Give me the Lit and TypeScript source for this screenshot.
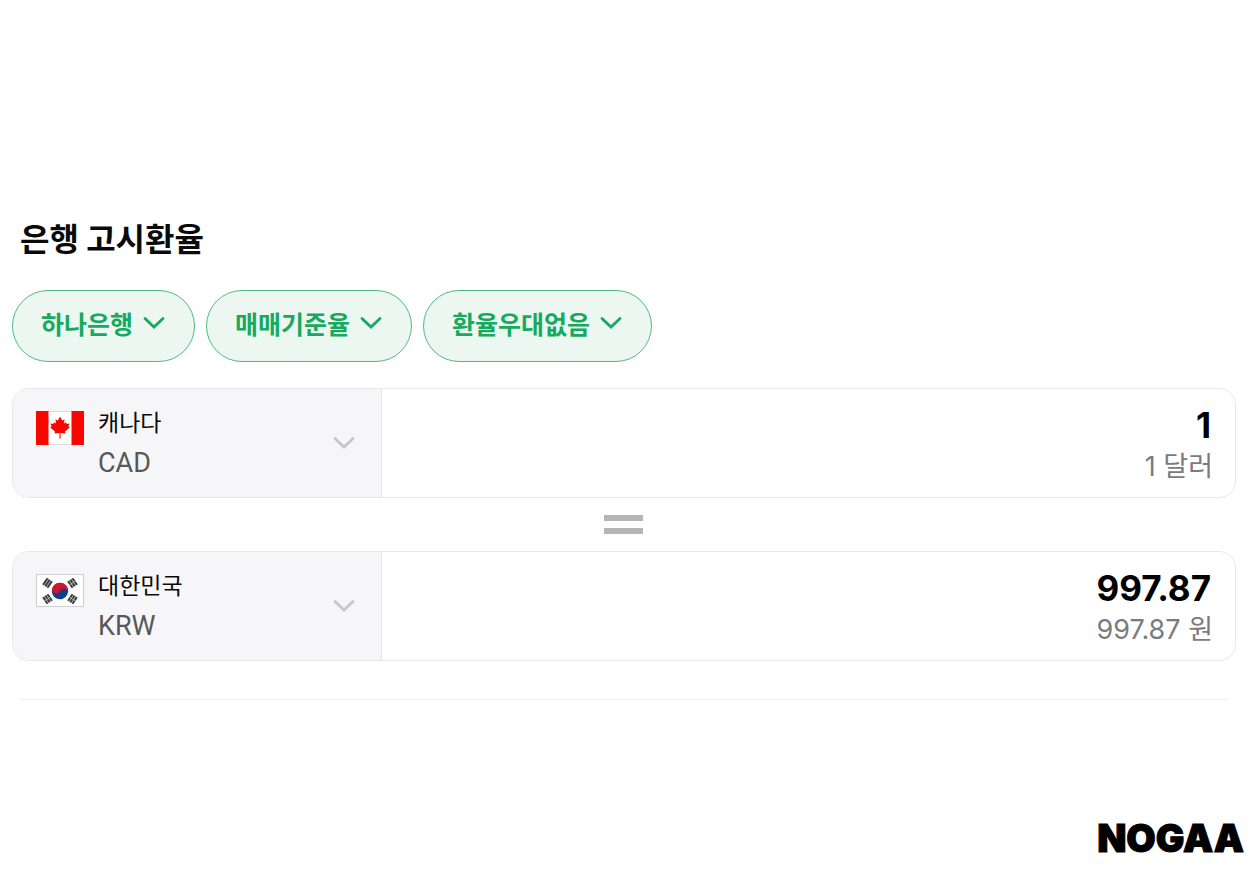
import { LitElement, html, css, svg } from "lit";
import { customElement, property, state } from "lit/decorators.js";

const chevron = html`<svg class="chevron" viewBox="0 0 22 14" width="22" height="14" aria-hidden="true">
  <path d="M2 2.4 L11 11 L20 2.4" fill="none" stroke="currentColor" stroke-width="2.8" stroke-linecap="round" stroke-linejoin="miter" />
</svg>`;

const canadaFlag = html`<svg class="flag" viewBox="0 0 48 34" width="48" height="34" role="img" aria-label="캐나다 국기">
  <rect width="48" height="34" fill="#fff" />
  <path d="M0 .5H48M0 33.5H48" stroke="#dcdcdc" />
  <path d="M0 0H12.5V34H0ZM35.5 0H48V34H35.5Z" fill="#f90500" />
  <path fill="#f90500" d="M24 5.6 L26.2 9.4 L28.6 8.6 L27.9 12.6 L30 11.2 L30.8 13 L33.5 12.4 L32.5 15.4 L33.8 16.6 L29 20.6 L29.4 22.4 L24.5 21.9 L24.6 27.6 H23.4 L23.5 21.9 L18.6 22.4 L19 20.6 L14.2 16.6 L15.5 15.4 L14.5 12.4 L17.2 13 L18 11.2 L20.1 12.6 L19.4 8.6 L21.8 9.4 Z" />
</svg>`;

const trigram = (x: number, y: number, angle: number, broken: boolean) => svg`
  <g transform="translate(${x} ${y}) rotate(${angle})" stroke="#3d3d3d" stroke-width="2.1">
    <path d="M-4 -2.6H4M-4 0H4M-4 2.6H4" />
    ${broken ? svg`<path d="M0 -3.8V3.8" stroke="#fff" stroke-width=".5" />` : null}
  </g>`;

const koreaFlag = html`<svg class="flag" viewBox="0 0 48 34" width="48" height="34" role="img" aria-label="대한민국 국기">
  <rect x=".5" y=".5" width="47" height="32" fill="#fff" stroke="#cfcfd1" />
  <g transform="rotate(24 24 17)">
    <circle cx="24" cy="17" r="8.2" fill="#0d3f8c" />
    <path d="M15.8 17a8.2 8.2 0 0 1 16.4 0a4.1 4.1 0 0 0 -8.2 0a4.1 4.1 0 0 1 -8.2 0Z" fill="#d3152b" />
  </g>
  ${trigram(11.5, 9, -56, false)} ${trigram(36.5, 9, 56, true)}
  ${trigram(11.5, 25, 56, true)} ${trigram(36.5, 25, -56, true)}
</svg>`;

@customElement("rate-filter")
export class RateFilter extends LitElement {
  @property() label = "";
  @property() value = "";

  static styles = css`
    :host { display: block; }
    .pill { display: grid; align-items: center; color: #17a95f; }
    .select {
      grid-area: 1 / 1;
      appearance: none;
      height: 72px;
      margin: 0;
      padding: 0 60px 6px 28px;
      border: 1px solid #4fb985;
      border-radius: 36px;
      background: #edf7f1;
      color: inherit;
      font: 700 25px/36px "Noto Sans CJK KR", sans-serif;
      cursor: pointer;
    }
    .chevron {
      grid-area: 1 / 1;
      justify-self: end;
      margin: 0 30px 6px 0;
      pointer-events: none;
    }
  `;

  render() {
    return html`<div class="pill">
      <select class="select" aria-label=${this.label}><option>${this.value}</option></select>
      ${chevron}
    </div>`;
  }
}

@customElement("currency-row")
export class CurrencyRow extends LitElement {
  @property() country = "";
  @property() code = "";
  @property() unit = "";
  @property() amount = "";
  @property({ attribute: false }) flag: unknown;

  static styles = css`
    :host { display: block; }
    .card {
      display: flex;
      border: 1px solid #e9e9eb;
      border-radius: 16px;
      overflow: hidden;
      background: #fff;
    }
    .currency {
      box-sizing: border-box;
      flex: 0 1 369px;
      display: grid;
      grid-template-columns: 48px 1fr;
      column-gap: 14px;
      align-items: start;
      padding: 14px 24px 14px 23px;
      border-right: 1px solid #e5e5e7;
      background: #f6f6f8;
    }
    .flag { margin-top: 8px; grid-area: 1 / 1; }
    .info { grid-area: 1 / 2; display: grid; align-items: center; color: #c7c7ca; }
    .select {
      grid-area: 1 / 1;
      appearance: none;
      width: 100%;
      height: 80px;
      margin: 0;
      padding: 0 32px 44px 0;
      border: 0;
      background: none;
      color: #0a0a0a;
      font: 400 23px/36px "Noto Sans CJK KR", sans-serif;
      cursor: pointer;
    }
    .code {
      grid-area: 1 / 1;
      align-self: end;
      color: #58585a;
      font: 400 27px/40px Roboto, sans-serif;
      pointer-events: none;
    }
    .chevron { grid-area: 1 / 1; justify-self: end; margin-right: 2px; pointer-events: none; }
    .value {
      flex: 1;
      min-width: 0;
      display: flex;
      flex-direction: column;
      padding: 14px 22px 10px;
      text-align: right;
    }
    .amount {
      box-sizing: border-box;
      width: 100%;
      height: 44px;
      margin: 0;
      padding: 0 2px 0 0;
      border: 0;
      outline: 0;
      background: none;
      color: #000;
      text-align: right;
      font: 700 35px/44px Inter, sans-serif;
    }
    .reading { color: #7b7b7d; font: 400 27px/40px Inter, "Noto Sans CJK KR", sans-serif; }
  `;

  private onInput(e: Event) {
    const value = (e.target as HTMLInputElement).value;
    this.dispatchEvent(new CustomEvent("amount-change", { detail: value }));
  }

  render() {
    return html`<div class="card">
      <div class="currency">
        ${this.flag}
        <div class="info">
          <select class="select" aria-label="통화 선택"><option>${this.country}</option></select>
          <span class="code">${this.code}</span>
          ${chevron}
        </div>
      </div>
      <div class="value">
        <input class="amount" type="text" inputmode="decimal" aria-label="${this.country} 금액" .value=${this.amount} @input=${this.onInput} />
        <span class="reading">${this.amount} ${this.unit}</span>
      </div>
    </div>`;
  }
}

const RATE = 997.87;
const format = (n: number) => (Number.isFinite(n) ? String(Math.round(n * 100) / 100) : "0");

@customElement("app-root")
export class AppRoot extends LitElement {
  @state() private cad = "1";
  @state() private krw = "997.87";

  static styles = css`
    :host { display: block; min-height: 100vh; background: #fff; }
    .page {
      box-sizing: border-box;
      min-height: 100vh;
      display: flex;
      flex-direction: column;
      padding: 212px 24px 30px 12px;
    }
    .title {
      margin: 0 8px 28px;
      color: #0a0a0a;
      font: 700 32px/50px "Noto Sans CJK KR", sans-serif;
    }
    .filters { display: flex; flex-wrap: wrap; gap: 11px; margin-bottom: 26px; }
    .equals { display: block; margin: 17px auto; }
    .divider { margin: 38px 8px 0; border: 0; border-top: 1px solid #f0f0f1; }
    .brand {
      margin: auto -8px 0 auto;
      color: #000;
      font: 900 38px/46px Inter, sans-serif;
      -webkit-text-stroke: 1px #000;
    }
  `;

  private fromCad(e: CustomEvent<string>) {
    this.cad = e.detail;
    this.krw = format(Number(e.detail) * RATE);
  }

  private fromKrw(e: CustomEvent<string>) {
    this.krw = e.detail;
    this.cad = format(Number(e.detail) / RATE);
  }

  render() {
    return html`<main class="page">
      <h1 class="title">은행 고시환율</h1>
      <div class="filters">
        <rate-filter label="은행" value="하나은행"></rate-filter>
        <rate-filter label="환율 기준" value="매매기준율"></rate-filter>
        <rate-filter label="환율 우대" value="환율우대없음"></rate-filter>
      </div>
      <currency-row country="캐나다" code="CAD" unit="달러" .flag=${canadaFlag} .amount=${this.cad} @amount-change=${this.fromCad}></currency-row>
      <svg class="equals" viewBox="0 0 40 19" width="40" height="19" role="img" aria-label="같음">
        <path d="M0 0H39V6H0ZM0 13H39V19H0Z" fill="#b5b5b5" />
      </svg>
      <currency-row country="대한민국" code="KRW" unit="원" .flag=${koreaFlag} .amount=${this.krw} @amount-change=${this.fromKrw}></currency-row>
      <hr class="divider" />
      <div class="brand">NOGAA</div>
    </main>`;
  }
}
